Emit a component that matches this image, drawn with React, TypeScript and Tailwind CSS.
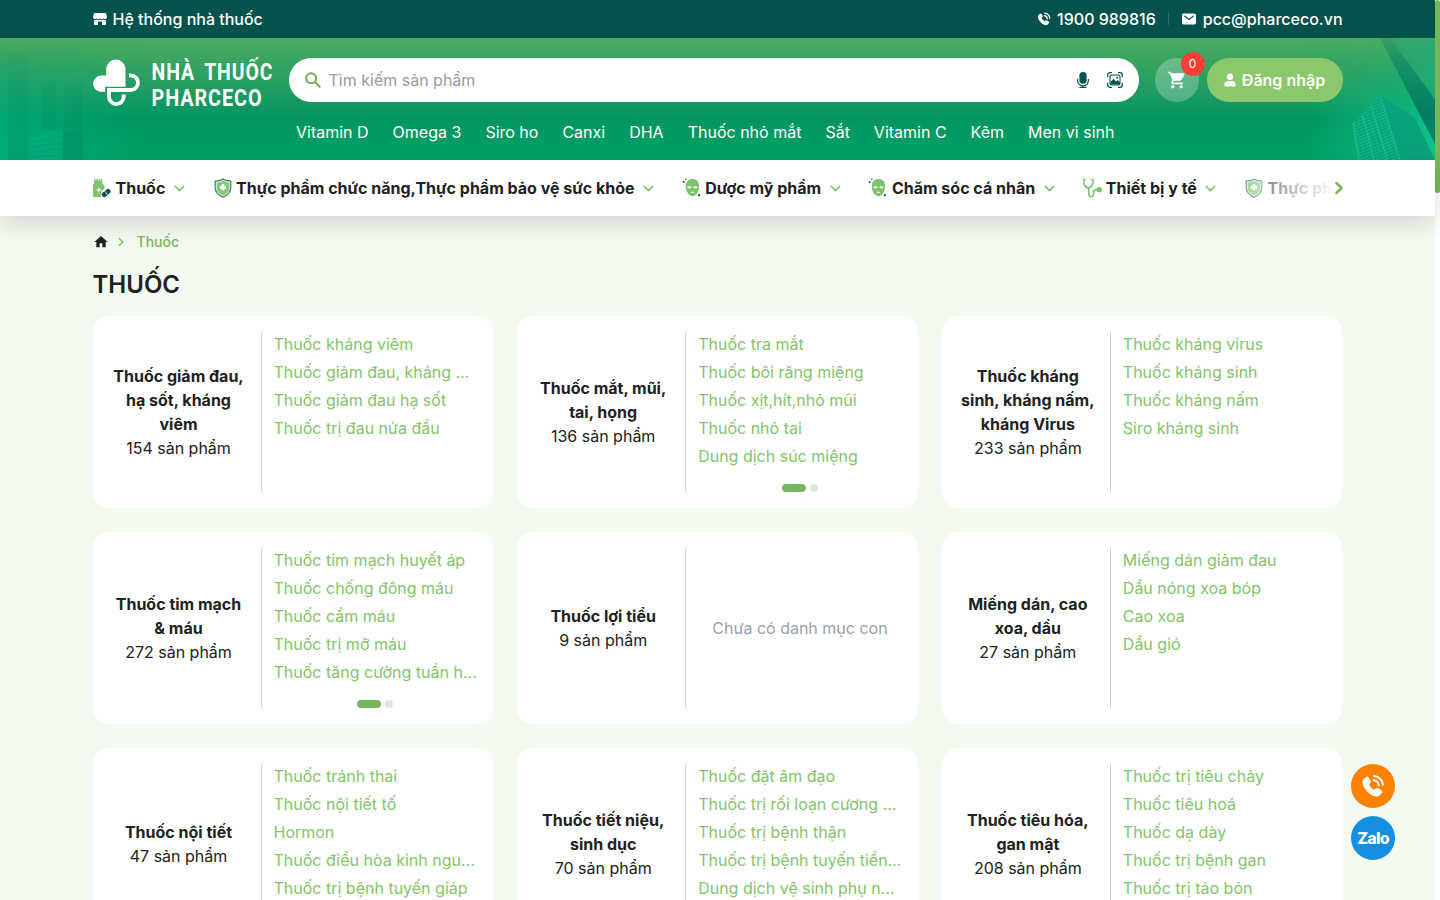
import { clsx } from 'clsx';
import { IoMail } from 'react-icons/io5';
import { MdHome, MdShoppingCart } from 'react-icons/md';
import { ChevronDown, ChevronRight } from 'lucide-react';

type IconName = 'bottle' | 'shield' | 'mask' | 'stethoscope';

interface Category {
  title: string;
  count: number;
  items: string[];
  paged?: boolean;
}

const QUICK_LINKS = ['Vitamin D', 'Omega 3', 'Siro ho', 'Canxi', 'DHA', 'Thuốc nhỏ mắt', 'Sắt', 'Vitamin C', 'Kẽm', 'Men vi sinh'];

const NAV: { label: string; icon: IconName }[] = [
  { label: 'Thuốc', icon: 'bottle' },
  { label: 'Thực phẩm chức năng,Thực phẩm bảo vệ sức khỏe', icon: 'shield' },
  { label: 'Dược mỹ phẩm', icon: 'mask' },
  { label: 'Chăm sóc cá nhân', icon: 'mask' },
  { label: 'Thiết bị y tế', icon: 'stethoscope' },
  { label: 'Thực phẩm', icon: 'shield' },
];

const CATEGORIES: Category[] = [
  { title: 'Thuốc giảm đau, hạ sốt, kháng viêm', count: 154, items: ['Thuốc kháng viêm', 'Thuốc giảm đau, kháng viêm', 'Thuốc giảm đau hạ sốt', 'Thuốc trị đau nửa đầu'] },
  { title: 'Thuốc mắt, mũi, tai, họng', count: 136, items: ['Thuốc tra mắt', 'Thuốc bôi răng miệng', 'Thuốc xịt,hít,nhỏ mũi', 'Thuốc nhỏ tai', 'Dung dịch súc miệng'], paged: true },
  { title: 'Thuốc kháng sinh, kháng nấm, kháng Virus', count: 233, items: ['Thuốc kháng virus', 'Thuốc kháng sinh', 'Thuốc kháng nấm', 'Siro kháng sinh'] },
  { title: 'Thuốc tim mạch & máu', count: 272, items: ['Thuốc tim mạch huyết áp', 'Thuốc chống đông máu', 'Thuốc cầm máu', 'Thuốc trị mỡ máu', 'Thuốc tăng cường tuần hoàn'], paged: true },
  { title: 'Thuốc lợi tiểu', count: 9, items: [] },
  { title: 'Miếng dán, cao xoa, dầu', count: 27, items: ['Miếng dán giảm đau', 'Dầu nóng xoa bóp', 'Cao xoa', 'Dầu gió'] },
  { title: 'Thuốc nội tiết', count: 47, items: ['Thuốc tránh thai', 'Thuốc nội tiết tố', 'Hormon', 'Thuốc điều hòa kinh nguyệt', 'Thuốc trị bệnh tuyến giáp'], paged: true },
  { title: 'Thuốc tiết niệu, sinh dục', count: 70, items: ['Thuốc đặt âm đạo', 'Thuốc trị rối loạn cương dương', 'Thuốc trị bệnh thận', 'Thuốc trị bệnh tuyến tiền liệt', 'Dung dịch vệ sinh phụ nữ, nam'], paged: true },
  { title: 'Thuốc tiêu hóa, gan mật', count: 208, items: ['Thuốc trị tiêu chảy', 'Thuốc tiêu hoá', 'Thuốc dạ dày', 'Thuốc trị bệnh gan', 'Thuốc trị táo bón'], paged: true },
];

function PhoneIcon({ className }: { className?: string }) {
  return (
    <svg viewBox="0 0 24 24" className={className} fill="currentColor">
      <path d="M2 6l2.600-2.700a2 2 0 0 1 3.100.3l1.800 2.900a2.200 2.200 0 0 1-.3 2.600L8 10.400c1 2.300 3 4.300 5.400 5.400l1.300-1.200a2.200 2.200 0 0 1 2.600-.3l2.900 1.800a2 2 0 0 1 .3 3.100L17.800 22c-2 1.400-6.900.3-11.200-4S.6 8 2 6z" />
      <path d="M12.500 6.300c2.800.3 4.900 2.300 5.300 5.100M13 2c4.800.4 8.500 4 9 8.800" fill="none" stroke="currentColor" strokeWidth="2" strokeLinecap="round" />
    </svg>
  );
}

function StoreIcon() {
  return (
    <svg viewBox="0 0 14 12" className="h-3 w-3.5" fill="currentColor">
      <path d="M1.800 0h10.400a1 1 0 0 1 1 .8L14 4v.6a1.900 1.900 0 0 1-3.500.6 2 2 0 0 1-3.500 0 2 2 0 0 1-3.500 0A1.900 1.900 0 0 1 0 4.600V4L.8.800a1 1 0 0 1 1-.8z" />
      <path d="M1 7.300q1.500.3 2.600-.7 1.700 1.300 3.400 0 1.700 1.300 3.400 0 1.100 1 2.600.7V11a1 1 0 0 1-1 1H9V9.500a1 1 0 0 0-1-1H6a1 1 0 0 0-1 1V12H2a1 1 0 0 1-1-1z" />
    </svg>
  );
}

function NavIcon({ name }: { name: IconName }) {
  if (name === 'bottle') {
    return (
      <svg viewBox="0 0 20 20" className="size-5 shrink-0">
        <path d="M2 .8h1.400v2h.9v-2h1.400v2h.9v-2H8v2h.9v-2h1.400V5H9.800L12.500 7.500v3L9 14v5H2.500A1.500 1.500 0 0 1 1 17.500V7l1.500-2H2z" fill="#7cc36c" />
        <path d="M6.800 9.500v5M4.300 12h5" stroke="#fff" strokeWidth="1.100" />
        <path d="M12.300 16.600l3.700-3.200" stroke="#05524c" strokeWidth="5" strokeLinecap="round" />
        <path d="M12.600 12.800l3 4.200" stroke="#fff" strokeWidth=".9" />
      </svg>
    );
  }

  if (name === 'shield') {
    return (
      <svg viewBox="0 0 20 20" className="size-5 shrink-0">
        <path d="M10 .9c2.600 1.700 5 2.200 7.800 2.300v6.100c0 4.600-3 7.900-7.800 9.800-4.800-1.900-7.800-5.200-7.800-9.800V3.200C5 3.100 7.400 2.600 10 .9z" fill="#e5f5df" stroke="#3b8073" strokeWidth="1.200" />
        <path d="M10 2.700c2 1.100 3.900 1.700 6.300 1.900v4.800c0 3.600-2.400 6.300-6.300 7.900-3.900-1.600-6.300-4.300-6.300-7.900V4.600C6.100 4.400 8 3.800 10 2.700z" fill="#86c976" />
        <path d="M10 6.200v6.400M6.800 9.400h6.400" stroke="#fff" strokeWidth="2.600" />
      </svg>
    );
  }

  if (name === 'mask') {
    return (
      <svg viewBox="0 0 20 20" className="size-5 shrink-0">
        <path d="M10.500 1c4 0 6.600 2.400 6.600 6.800 0 5.500-2.700 10.400-6.600 10.400S3.800 13.300 3.800 7.800c0-4.400 2.700-6.800 6.700-6.800z" fill="#7cc36c" />
        <ellipse cx="7.500" cy="9.300" rx="2" ry="1.300" fill="#e4f5de" />
        <ellipse cx="13.500" cy="9.300" rx="2" ry="1.300" fill="#e4f5de" />
        <path d="M8.200 14.200q2.300-1.400 4.600 0-2.300 1.700-4.600 0z" fill="#e4f5de" />
        <circle cx="1.700" cy="4" r="1" fill="#05524c" />
        <circle cx="3.800" cy="1.200" r=".8" fill="#05524c" />
        <circle cx="17" cy="17.200" r="1.100" fill="#05524c" />
      </svg>
    );
  }

  return (
    <svg viewBox="0 0 20 20" className="size-5 shrink-0" fill="none" stroke="#7cc36c" strokeWidth="1.500" strokeLinecap="round">
      <path d="M3.200 1.500H2C.7 4.300 2.500 9.500 6.300 9.900c4-.4 5.700-5.600 4.600-8.400H9.500" />
      <path d="M6.400 10c-.2 1.200.4 2 .4 3v2.800c0 1.800.7 2.900 2.300 2.900s2.400-1.200 2.400-2.700c0-1.800-.6-4 1.300-4.200h2" />
      <circle cx="17.200" cy="11.800" r="2" fill="#7cc36c" />
    </svg>
  );
}

function Logo() {
  return (
    <svg viewBox="0 0 184 56" className="h-14 w-[184px] shrink-0 overflow-visible">
      <path d="M13.200 23.500v-6.300a9.650 9.650 0 0 1 19.300 0v17.600H12.200v5H8.300a8.150 8.150 0 0 1 0-16.300z" fill="#fff" />
      <path d="M36 23.400h1.700a7.300 7.300 0 0 1 0 14.600H16v6.700a7.350 7.350 0 0 0 14.700 0v-2.200" fill="none" stroke="#fff" strokeWidth="3.800" />
      <g fill="#fff" fontFamily="Roboto, sans-serif" fontWeight="700" fontSize="24.800" letterSpacing="1.200" wordSpacing="5">
        <text x="58.500" y="28" textLength="122" lengthAdjust="spacingAndGlyphs">NHÀ THUỐC</text>
        <text x="58.500" y="53.500" textLength="111" lengthAdjust="spacingAndGlyphs">PHARCECO</text>
      </g>
    </svg>
  );
}

function Skyline() {
  return (
    <>
      <svg viewBox="0 0 150 122" className="absolute left-0 top-0 h-full w-[150px]">
        <defs>
          <linearGradient id="tower" x1="0" y1="0" x2="0" y2="1">
            <stop offset="0" stopColor="#047a5c" stopOpacity=".08" />
            <stop offset="1" stopColor="#047a5c" stopOpacity=".18" />
          </linearGradient>
          <linearGradient id="mist" x1="0" y1="0" x2="1" y2="0">
            <stop offset="0" stopColor="#00b585" stopOpacity=".6" />
            <stop offset="1" stopColor="#00b585" stopOpacity="0" />
          </linearGradient>
          <linearGradient id="haze" x1="0" y1="0" x2="0" y2="1">
            <stop offset="0" stopColor="#fff" stopOpacity="0" />
            <stop offset=".7" stopColor="#fff" stopOpacity="1" />
          </linearGradient>
          <mask id="hazeMask">
            <path d="M0 0h150v122H0z" fill="url(#haze)" />
          </mask>
        </defs>
        <path d="M0 0h150v122H0z" fill="url(#mist)" mask="url(#hazeMask)" />
        <path d="M8 17l8-4 12 6v103H8zM42 48l14-6v50H42zM64 50l18-6v54H64z" fill="url(#tower)" />
        <path d="M30 99l32-8v31H30z" fill="#00b487" opacity=".35" />
        <path d="M30 104l32-5M30 109l32-4M30 114l32-3M30 119l32-2" stroke="#08966e" opacity=".6" />
        <path d="M63 92l20 5v25H63z" fill="#04855f" opacity=".35" />
      </svg>
      <svg viewBox="0 0 130 122" className="absolute right-0 top-0 h-full w-[130px]">
        <defs>
          <linearGradient id="glow" x1="0" y1="0" x2="1" y2="0">
            <stop offset="0" stopColor="#12c48c" stopOpacity="0" />
            <stop offset="1" stopColor="#12c48c" stopOpacity=".9" />
          </linearGradient>
          <pattern id="windows" width="5" height="3" patternUnits="userSpaceOnUse" patternTransform="rotate(-20)">
            <path d="M0 .5h4" stroke="#19c996" strokeWidth=".9" />
          </pattern>
          <linearGradient id="edge" x1="0" y1="0" x2="0" y2="1">
            <stop offset="0" stopColor="#04785d" stopOpacity=".25" />
            <stop offset=".7" stopColor="#047a60" stopOpacity=".95" />
            <stop offset="1" stopColor="#047a60" stopOpacity=".8" />
          </linearGradient>
        </defs>
        <path d="M0 0h130v122H0z" fill="url(#glow)" mask="url(#hazeMask)" />
        <path d="M75 0h10l45 61v45z" fill="url(#edge)" />
        <path d="M85 0h45v61z" fill="#27a372" opacity=".6" />
        <path d="M92 0h38v52z" fill="url(#windows)" opacity=".3" />
        <path d="M48 85l27-28 20 65H53z" fill="#08a377" />
        <path d="M48 85l27-28 20 65H53z" fill="url(#windows)" opacity=".8" />
        <path d="M75 57l35 23 20 42H95z" fill="#08a07a" />
        <path d="M75 57l35 23 20 42H95z" fill="url(#windows)" opacity=".2" />
        <path d="M75 57l20 65M48 85l6 37M57 76l12 46M66 66l16 56" stroke="#23c996" strokeWidth="1" fill="none" opacity=".8" />
      </svg>
    </>
  );
}

function TopBar() {
  return (
    <div className="h-[38px] bg-[#05524c] text-white">
      <div className="mx-auto flex h-full w-[1250px] items-center justify-between font-medium">
        <div className="flex items-center gap-1.5">
          <StoreIcon />
          <span>Hệ thống nhà thuốc</span>
        </div>
        <div className="flex items-center">
          <PhoneIcon className="mr-1.5 size-3.5" />
          <span>1900 989816</span>
          <span className="mx-3 h-3 w-px bg-[#2a7068]" />
          <IoMail className="mr-1.5 size-4" />
          <span>pcc@pharceco.vn</span>
        </div>
      </div>
    </div>
  );
}

function SearchBox() {
  return (
    <div className="flex h-11 w-[850px] items-center rounded-full bg-white pl-4 pr-4">
      <svg viewBox="0 0 16 16" className="mr-2 size-4" fill="none" stroke="#72ad55" strokeWidth="2">
        <circle cx="6.200" cy="6.200" r="5" />
        <path d="M10 10l5.300 5.300" />
      </svg>
      <span className="flex-1 text-[#9b9b9b]">Tìm kiếm sản phẩm</span>
      <svg viewBox="0 0 16 16" className="mr-4 size-4">
        <rect x="4.400" y="0" width="7.200" height="11.800" rx="3.600" fill="#05524c" />
        <path d="M2.600 7v1.500a5.400 5.400 0 0 0 10.800 0V7M8 13.500V16M4.500 15.400h7" fill="none" stroke="#05524c" strokeWidth="1.200" />
      </svg>
      <svg viewBox="0 0 16 16" className="size-4" fill="none" stroke="#05524c" strokeWidth="1.300" strokeLinecap="round">
        <path d="M.7 4.500V3a2.300 2.300 0 0 1 2.300-2.300h1.500M11.500.7H13A2.300 2.300 0 0 1 15.300 3v1.500M15.300 11.500V13a2.300 2.300 0 0 1-2.300 2.300h-1.500M4.500 15.300H3A2.300 2.300 0 0 1 .7 13v-1.500" />
        <rect x="3" y="3" width="10" height="10" rx="1.500" strokeWidth="1.100" />
        <path d="M3.500 10l3-3.200 2.500 2.700 1.500-1.500 2.500 2.500v2h-9.500z" fill="#05524c" stroke="none" />
        <circle cx="10.200" cy="5.800" r="1" fill="#05524c" stroke="none" />
      </svg>
    </div>
  );
}

function Header() {
  return (
    <header className="relative h-[122px] bg-[linear-gradient(180deg,#4caa62_0%,#1d9b61_45%,#009560_68%,#00a368_100%)] text-white">
      <Skyline />
      <div className="relative mx-auto w-[1250px]">
        <div className="flex items-center pt-3.5">
          <Logo />
          <div className="ml-3">
            <SearchBox />
          </div>
          <div className="relative ml-4 flex size-11 items-center justify-center rounded-full bg-white/25">
            <MdShoppingCart className="size-5" />
            <span className="absolute -right-1.5 -top-1.5 flex size-6 items-center justify-center rounded-full bg-[#f93f36] text-xs">0</span>
          </div>
          <button className="ml-2 flex h-11 w-[136px] items-center justify-center gap-1.5 rounded-full bg-[#8bc86c] font-semibold">
            <svg viewBox="0 0 12 14" className="h-3.5 w-3" fill="currentColor">
              <circle cx="6" cy="3.700" r="3.200" />
              <path d="M.5 13.500V11.500q0-3.500 3.500-3.500h4q3.500 0 3.500 3.500v2z" />
            </svg>
            Đăng nhập
          </button>
        </div>
        <div className="ml-[203.5px] mt-3 flex gap-6">
          {QUICK_LINKS.map((q) => (
            <span key={q} className="whitespace-nowrap">{q}</span>
          ))}
        </div>
      </div>
    </header>
  );
}

function NavBar() {
  return (
    <nav className="relative h-14 bg-white shadow-[0_8px_24px_rgba(0,0,0,0.14)]">
      <div className="relative mx-auto h-full w-[1251px]">
        <div className="flex h-full items-center gap-[23.2px] overflow-hidden">
          {NAV.map((item) => (
            <div key={item.label} className="flex shrink-0 items-center font-bold">
              <NavIcon name={item.icon} />
              <span className="ml-[3.5px] whitespace-nowrap">{item.label}</span>
              <ChevronDown strokeWidth={2} className="ml-[5.5px] mr-[1.5px] size-[17px] text-[#7fbf6c]" />
            </div>
          ))}
        </div>
        <div className="absolute -right-1.5 top-0 flex h-full w-32 items-center justify-end bg-linear-to-r from-white/0 via-white/60 via-45% to-white to-90%">
          <ChevronRight strokeWidth={3} className="size-5 text-[#7ab85f]" />
        </div>
      </div>
    </nav>
  );
}

function CategoryCard({ title, count, items, paged }: Category) {
  return (
    <div className="flex h-48 rounded-2xl bg-white py-4">
      <div className="flex w-[168px] shrink-0 flex-col items-center justify-center pl-[18px] pr-3.5 text-center">
        <h2 className="font-bold">{title}</h2>
        <p>{count} sản phẩm</p>
      </div>
      <div className="flex min-w-0 flex-1 flex-col border-l border-[#c9ccd3] pl-3 pr-4 text-[#84c46a]">
        {items.map((item) => (
          <div key={item} className="h-7 shrink-0 truncate leading-6">{item}</div>
        ))}
        {items.length === 0 && (
          <div className="flex flex-1 items-center justify-center text-gray-400">Chưa có danh mục con</div>
        )}
        {paged && (
          <div className="mt-3 flex justify-center gap-1">
            <span className="h-2 w-6 rounded-full bg-[#78b65c]" />
            <span className="size-2 rounded-full bg-[#d5ead0]" />
          </div>
        )}
      </div>
    </div>
  );
}

function FloatingButtons() {
  return (
    <div className="absolute left-[1351px] top-[764px] flex flex-col gap-2 text-white">
      <div className="flex size-11 items-center justify-center rounded-full bg-[#ff8100]">
        <PhoneIcon className="size-6" />
      </div>
      <div className="flex size-11 items-center justify-center rounded-full bg-[#148fe2] text-base font-extrabold tracking-tighter">
        Zalo
      </div>
    </div>
  );
}

export default function App() {
  return (
    <div className={clsx('relative flex h-[900px] w-[1440px] overflow-hidden bg-[#f3faf0]', "font-['Inter','Noto_Sans',sans-serif] text-base text-[#212121]")}>
      <div className="w-[1435px]">
        <TopBar />
        <Header />
        <NavBar />
        <main className="mx-auto w-[1250px] pt-4">
          <div className="flex h-5 items-center text-sm font-medium text-[#78b65c]">
            <MdHome className="size-4 text-[#212121]" />
            <ChevronRight className="ml-[5px] mr-[9px] size-3.5" />
            <span>Thuốc</span>
          </div>
          <h1 className="mt-[17px] text-2xl font-semibold">THUỐC</h1>
          <div className="mt-[15px] grid grid-cols-3 gap-6">
            {CATEGORIES.map((c) => (
              <CategoryCard key={c.title} {...c} />
            ))}
          </div>
        </main>
      </div>
      {/* Scrollbar */}
      <div className="w-[5px] bg-white">
        <div className="h-[193px] rounded-full bg-[#78b65c]" />
      </div>
      <FloatingButtons />
    </div>
  );
}
